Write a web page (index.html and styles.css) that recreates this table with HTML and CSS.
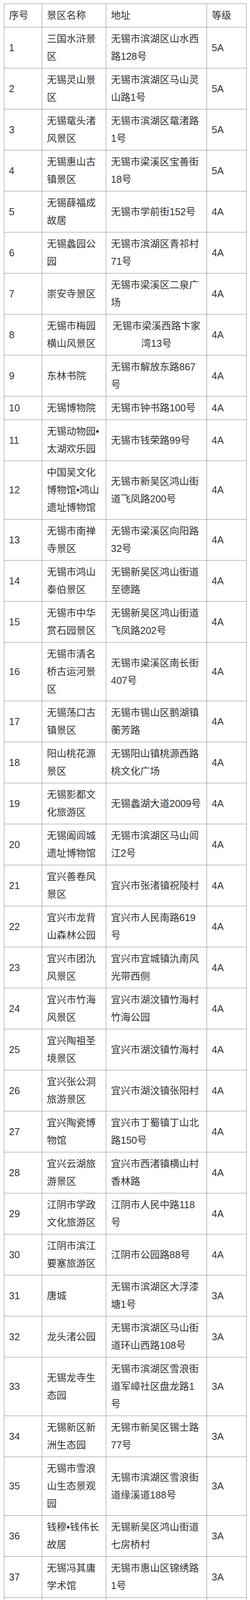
FILE: index.html
```html
<!DOCTYPE html>
<html lang="zh-CN">
<head>
<meta charset="utf-8">
<title>无锡A级景区名录</title>
<link rel="stylesheet" href="styles.css">
</head>
<body>
<table class="spots">
<colgroup>
<col class="c-no"><col class="c-name"><col class="c-addr"><col class="c-level">
</colgroup>
<thead>
<tr><th>序号</th><th>景区名称</th><th>地址</th><th>等级</th></tr>
</thead>
<tbody>
<tr><td>1</td><td class="name">三国水浒景区</td><td class="addr">无锡市滨湖区山水西路128号</td><td>5A</td></tr>
<tr><td>2</td><td class="name">无锡灵山景区</td><td class="addr">无锡市滨湖区马山灵山路1号</td><td>5A</td></tr>
<tr><td>3</td><td class="name">无锡鼋头渚风景区</td><td class="addr">无锡市滨湖区鼋渚路1号</td><td>5A</td></tr>
<tr><td>4</td><td class="name">无锡惠山古镇景区</td><td class="addr">无锡市梁溪区宝善街18号</td><td>5A</td></tr>
<tr><td>5</td><td class="name">无锡薛福成故居</td><td class="addr">无锡市学前街152号</td><td>4A</td></tr>
<tr><td>6</td><td class="name">无锡蠡园公园</td><td class="addr">无锡市滨湖区青祁村71号</td><td>4A</td></tr>
<tr><td>7</td><td class="name">崇安寺景区</td><td class="addr">无锡市梁溪区二泉广场</td><td>4A</td></tr>
<tr><td>8</td><td class="name">无锡市梅园横山风景区</td><td class="addr center">无锡市梁溪西路卞家湾13号</td><td>4A</td></tr>
<tr><td>9</td><td class="name">东林书院</td><td class="addr">无锡市解放东路867号</td><td>4A</td></tr>
<tr><td>10</td><td class="name">无锡博物院</td><td class="addr">无锡市钟书路100号</td><td>4A</td></tr>
<tr><td>11</td><td class="name">无锡动物园•太湖欢乐园</td><td class="addr">无锡市钱荣路99号</td><td>4A</td></tr>
<tr><td>12</td><td class="name">中国吴文化博物馆•鸿山遗址博物馆</td><td class="addr">无锡市新吴区鸿山街道飞凤路200号</td><td>4A</td></tr>
<tr><td>13</td><td class="name">无锡市南禅寺景区</td><td class="addr">无锡市梁溪区向阳路32号</td><td>4A</td></tr>
<tr><td>14</td><td class="name">无锡市鸿山泰伯景区</td><td class="addr">无锡新吴区鸿山街道至德路</td><td>4A</td></tr>
<tr><td>15</td><td class="name">无锡市中华赏石园景区</td><td class="addr">无锡新吴区鸿山街道飞凤路202号</td><td>4A</td></tr>
<tr><td>16</td><td class="name">无锡市清名桥古运河景区</td><td class="addr">无锡市梁溪区南长街407号</td><td>4A</td></tr>
<tr><td>17</td><td class="name">无锡荡口古镇景区</td><td class="addr">无锡市锡山区鹅湖镇蘅芳路</td><td>4A</td></tr>
<tr><td>18</td><td class="name">阳山桃花源景区</td><td class="addr">无锡阳山镇桃源西路桃文化广场</td><td>4A</td></tr>
<tr><td>19</td><td class="name">无锡影都文化旅游区</td><td class="addr">无锡蠡湖大道2009号</td><td>4A</td></tr>
<tr><td>20</td><td class="name">无锡阖闾城遗址博物馆</td><td class="addr">无锡市滨湖区马山闾江2号</td><td>4A</td></tr>
<tr><td>21</td><td class="name">宜兴善卷风景区</td><td class="addr">宜兴市张渚镇祝陵村</td><td>4A</td></tr>
<tr><td>22</td><td class="name">宜兴市龙背山森林公园</td><td class="addr">宜兴市人民南路619号</td><td>4A</td></tr>
<tr><td>23</td><td class="name">宜兴市团氿风景区</td><td class="addr">宜兴市宜城镇氿南风光带西侧</td><td>4A</td></tr>
<tr><td>24</td><td class="name">宜兴市竹海风景区</td><td class="addr">宜兴市湖汶镇竹海村竹海公园</td><td>4A</td></tr>
<tr><td>25</td><td class="name">宜兴陶祖圣境景区</td><td class="addr">宜兴市湖汶镇竹海村</td><td>4A</td></tr>
<tr><td>26</td><td class="name">宜兴张公洞旅游景区</td><td class="addr">宜兴市湖汶镇张阳村</td><td>4A</td></tr>
<tr><td>27</td><td class="name">宜兴陶瓷博物馆</td><td class="addr">宜兴市丁蜀镇丁山北路150号</td><td>4A</td></tr>
<tr><td>28</td><td class="name">宜兴云湖旅游景区</td><td class="addr">宜兴市西渚镇横山村香林路</td><td>4A</td></tr>
<tr><td>29</td><td class="name">江阴市学政文化旅游区</td><td class="addr">江阴市人民中路118号</td><td>4A</td></tr>
<tr><td>30</td><td class="name">江阴市滨江要塞旅游区</td><td class="addr">江阴市公园路88号</td><td>4A</td></tr>
<tr><td>31</td><td class="name">唐城</td><td class="addr">无锡市滨湖区大浮漆塘1号</td><td>3A</td></tr>
<tr><td>32</td><td class="name">龙头渚公园</td><td class="addr">无锡市滨湖区马山街道环山西路108号</td><td>3A</td></tr>
<tr><td>33</td><td class="name">无锡龙寺生态园</td><td class="addr">无锡市滨湖区雪浪街道军嶂社区盘龙路1号</td><td>3A</td></tr>
<tr><td>34</td><td class="name">无锡新区新洲生态园</td><td class="addr">无锡市新吴区锡士路77号</td><td>3A</td></tr>
<tr><td>35</td><td class="name">无锡市雪浪山生态景观园</td><td class="addr">无锡市滨湖区雪浪街道缘溪道188号</td><td>3A</td></tr>
<tr><td>36</td><td class="name">钱穆•钱伟长故居</td><td class="addr">无锡新吴区鸿山街道七房桥村</td><td>3A</td></tr>
<tr><td>37</td><td class="name">无锡冯其庸学术馆</td><td class="addr">无锡市惠山区锦绣路1号</td><td>3A</td></tr>
<tr><td>38</td><td class="name">无锡锦绣园</td><td class="addr">无锡市惠山区中兴中路3号</td><td>3A</td></tr>
<tr><td>39</td><td class="name">宜兴阳山荡景区</td><td class="addr">宜兴市芳桥街道阳山荡东北侧</td><td>3A</td></tr>
<tr><td>40</td><td class="name">宜兴华东百畅生态休闲度假园</td><td class="addr">无锡市宜兴市张渚镇南门村马坞岕</td><td>3A</td></tr>
<tr><td>41</td><td class="name">江阴长泾古镇文化旅游区</td><td class="addr">江阴市长泾镇河北老街</td><td>3A</td></tr>
<tr><td>42</td><td class="name">梅村泰伯庙</td><td class="addr">无锡市新吴区梅村泰伯中路21号</td><td>2A</td></tr>
<tr><td>43</td><td class="name">江阴徐霞客故居</td><td class="addr">江阴市徐霞客镇徐霞客村南旸岐21号</td><td>2A</td></tr>
<tr><td>44</td><td class="name">江阴季子文化公园</td><td class="addr">江阴市申港街道人民南路季子祠</td><td>2A</td></tr>
</tbody>
</table>
</body>
</html>
```

FILE: styles.css
```css
html, body {
  background: #ffffff;
}

body {
  margin: 9px 0 0 10px;
  font-family: "Liberation Sans", "Noto Sans CJK SC", sans-serif;
  color: #333333;
}

.spots {
  width: 620px;
  table-layout: fixed;
  border-collapse: collapse;
  font-size: 25px;
  line-height: 45px;
}

.c-no { width: 97px; }
.c-name { width: 164px; }
.c-addr { width: 258px; }
.c-level { width: 101px; }

.spots th,
.spots td {
  border: 1px solid #8a8a8a;
  padding: 7px 12px;
  text-align: left;
  vertical-align: middle;
  font-weight: normal;
}

.spots td.center {
  text-align: center;
}
```
